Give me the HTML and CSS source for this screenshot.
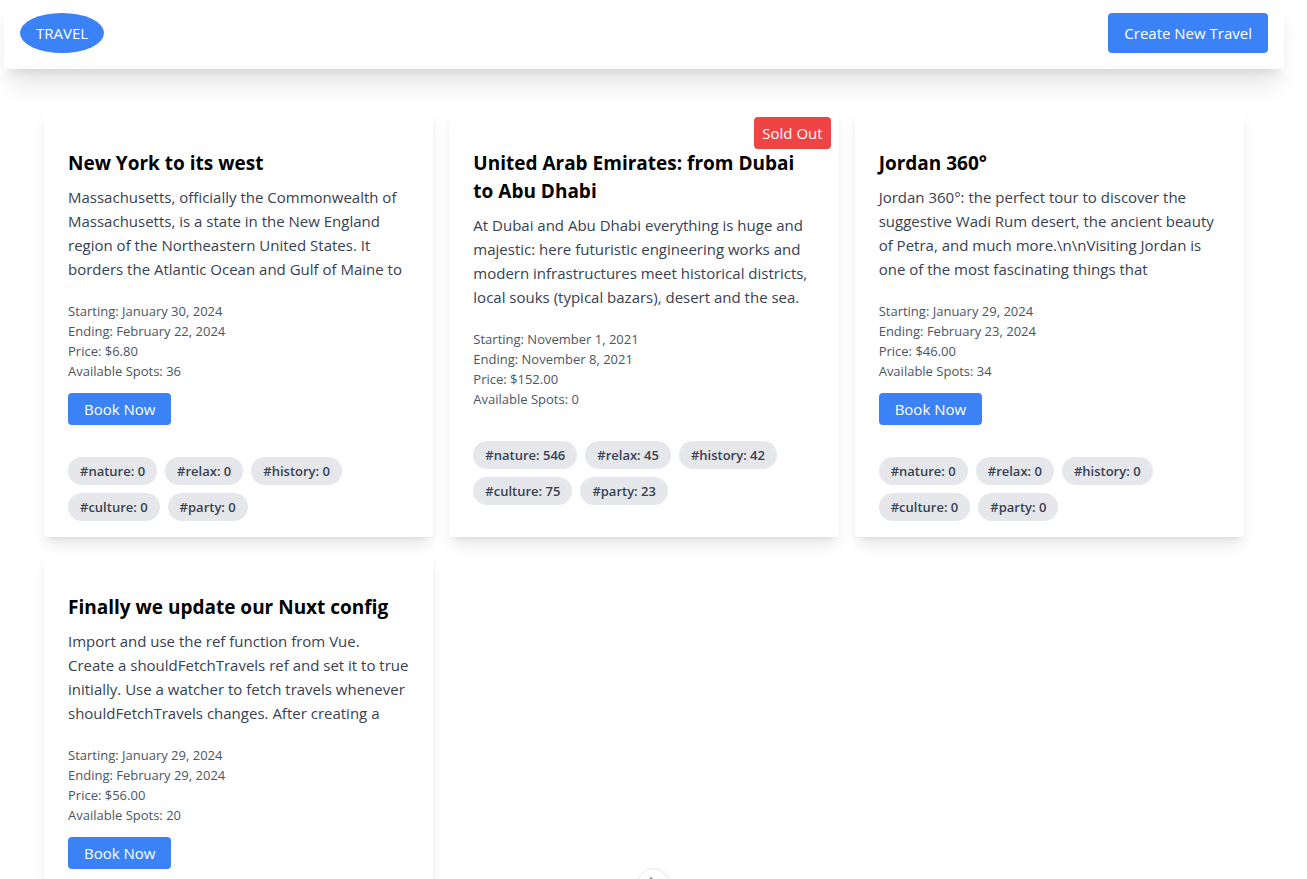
FILE: index.html
```
<!DOCTYPE html>
<html lang="en">
<head>
<meta charset="utf-8">
<title>Travel</title>
<link rel="stylesheet" href="styles.css">
</head>
<body>
<div class="page">
  <header class="nav">
    <a class="brand" href="#">TRAVEL</a>
    <button class="btn btn-large" type="button">Create New Travel</button>
  </header>
  <main class="grid">
    <article class="card">
      <h2 class="title">New York to its west</h2>
      <p class="description">Massachusetts, officially the Commonwealth of Massachusetts, is a state in the New England region of the Northeastern United States. It borders the Atlantic Ocean and Gulf of Maine to</p>
      <div class="details">
        <p>Starting: January 30, 2024</p>
        <p>Ending: February 22, 2024</p>
        <p>Price: $6.80</p>
        <p>Available Spots: 36</p>
      </div>
      <button class="btn book" type="button">Book Now</button>
      <div class="tags">
        <span class="tag">#nature: 0</span>
        <span class="tag">#relax: 0</span>
        <span class="tag">#history: 0</span>
        <span class="tag">#culture: 0</span>
        <span class="tag">#party: 0</span>
      </div>
    </article>
    <article class="card">
      <span class="sold-out">Sold Out</span>
      <h2 class="title">United Arab Emirates: from Dubai to Abu Dhabi</h2>
      <p class="description">At Dubai and Abu Dhabi everything is huge and majestic: here futuristic engineering works and modern infrastructures meet historical districts, local souks (typical bazars), desert and the sea.</p>
      <div class="details">
        <p>Starting: November 1, 2021</p>
        <p>Ending: November 8, 2021</p>
        <p>Price: $152.00</p>
        <p>Available Spots: 0</p>
      </div>
      <div class="tags">
        <span class="tag">#nature: 546</span>
        <span class="tag">#relax: 45</span>
        <span class="tag">#history: 42</span>
        <span class="tag">#culture: 75</span>
        <span class="tag">#party: 23</span>
      </div>
    </article>
    <article class="card">
      <h2 class="title">Jordan 360°</h2>
      <p class="description">Jordan 360°: the perfect tour to discover the suggestive Wadi Rum desert, the ancient beauty of Petra, and much more.\n\nVisiting Jordan is one of the most fascinating things that</p>
      <div class="details">
        <p>Starting: January 29, 2024</p>
        <p>Ending: February 23, 2024</p>
        <p>Price: $46.00</p>
        <p>Available Spots: 34</p>
      </div>
      <button class="btn book" type="button">Book Now</button>
      <div class="tags">
        <span class="tag">#nature: 0</span>
        <span class="tag">#relax: 0</span>
        <span class="tag">#history: 0</span>
        <span class="tag">#culture: 0</span>
        <span class="tag">#party: 0</span>
      </div>
    </article>
    <article class="card">
      <h2 class="title">Finally we update our Nuxt config</h2>
      <p class="description">Import and use the ref function from Vue. Create a shouldFetchTravels ref and set it to true initially. Use a watcher to fetch travels whenever shouldFetchTravels changes. After creating a</p>
      <div class="details">
        <p>Starting: January 29, 2024</p>
        <p>Ending: February 29, 2024</p>
        <p>Price: $56.00</p>
        <p>Available Spots: 20</p>
      </div>
      <button class="btn book" type="button">Book Now</button>
    </article>
  </main>
</div>
<button class="devtools" type="button" aria-label="Toggle devtools">
  <svg width="16" height="16" viewBox="0 0 16 16" fill="none" stroke="#999" stroke-width="2" stroke-linejoin="round"><path d="M1 13 6 2l3 6 2-2 4 7z"/></svg>
</button>
</body>
</html>
```
FILE: styles.css
```
* { box-sizing: border-box; }

html { height: 100%; }

body {
  margin: 0;
  height: 100%;
  overflow: hidden;
  background: #fff;
  color: #000;
  font-family: "Segoe UI", "Open Sans", sans-serif;
  font-size: 15px;
  line-height: 24px;
}

h2, p { margin: 0; }

button { font: inherit; border: 0; cursor: pointer; }

.page { padding: 0 23px 0 4px; }

.nav {
  display: flex;
  justify-content: space-between;
  align-items: center;
  padding: 13px 16px 16px;
  background: #fff;
  box-shadow: 0 20px 25px -5px rgba(0, 0, 0, .1), 0 8px 10px -6px rgba(0, 0, 0, .1);
}

.brand {
  padding: 8px 16px;
  border-radius: 50%;
  background: #3b82f6;
  color: #fff;
  font-weight: 500;
  text-decoration: none;
}

.btn {
  padding: 4px 16px;
  border-radius: 4px;
  background: #3b82f6;
  color: #fff;
  font-weight: 500;
}

.btn-large { padding: 8px 16px; }

.grid {
  display: grid;
  grid-template-columns: repeat(3, minmax(0, 1fr));
  gap: 16px;
  padding: 40px;
}

.card {
  position: relative;
  display: flex;
  flex-direction: column;
  align-items: flex-start;
  padding: 40px 24px 16px;
  border-radius: 4px;
  background: #fff;
  box-shadow: 0 10px 15px -3px rgba(0, 0, 0, .1), 0 4px 6px -4px rgba(0, 0, 0, .1);
}

.sold-out {
  position: absolute;
  top: 8px;
  right: 8px;
  padding: 4px 8px;
  border-radius: 4px;
  background: #ef4444;
  color: #fff;
  font-weight: 500;
}

.title {
  margin-bottom: 8px;
  font-size: 19px;
  font-weight: 700;
  line-height: 28px;
}

.description {
  margin-bottom: 20px;
  color: #374151;
}

.details {
  color: #4b5563;
  font-size: 13px;
  line-height: 20px;
}

.book { margin-top: 12px; }

.tags {
  display: flex;
  flex-wrap: wrap;
  gap: 8px;
  margin-top: 32px;
}

.tag {
  padding: 4px 12px;
  border-radius: 14px;
  background: #e5e7eb;
  color: #374151;
  font-size: 13px;
  font-weight: 600;
  line-height: 20px;
}

.devtools {
  position: fixed;
  left: 50%;
  bottom: -21px;
  display: grid;
  place-items: center;
  width: 32px;
  height: 32px;
  margin-left: -17px;
  padding: 0;
  border: 1px solid #e8e8e8;
  border-radius: 50%;
  background: #fff;
  box-shadow: 2px 2px 8px rgba(0, 0, 0, .06);
}
```
